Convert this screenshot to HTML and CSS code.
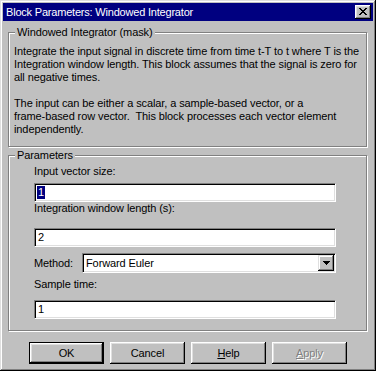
FILE: index.html
```html
<!DOCTYPE html>
<html>
<head>
<meta charset="utf-8">
<link rel="stylesheet" href="styles.css">
</head>
<body>
<div class="window">
  <div class="titlebar">
    <span class="title">Block Parameters: Windowed Integrator</span>
    <span class="close-btn"><svg width="8" height="7" viewBox="0 0 8 7" shape-rendering="crispEdges"><path d="M0 0h2v1h-2z M6 0h2v1h-2z M1 1h2v1h-2z M5 1h2v1h-2z M2 2h4v1h-4z M3 3h2v1h-2z M2 4h4v1h-4z M1 5h2v1h-2z M5 5h2v1h-2z M0 6h2v1h-2z M6 6h2v1h-2z"/></svg></span>
  </div>
  <div class="content">
    <fieldset class="group group-desc">
      <legend>Windowed Integrator (mask)</legend>
      <p class="para">Integrate the input signal in discrete time from time t-T to t where T is the<br>Integration window length. This block assumes that the signal is zero for<br>all negative times.</p>
      <p class="para">The input can be either a scalar, a sample-based vector, or a<br>frame-based row vector.&nbsp; This block processes each vector element<br>independently.</p>
    </fieldset>
    <fieldset class="group group-params">
      <legend>Parameters</legend>
      <div class="label lbl-1">Input vector size:</div>
      <div class="edit edit-1"><span class="selected">1</span></div>
      <div class="label lbl-2">Integration window length (s):</div>
      <div class="edit edit-2"><span>2</span></div>
      <div class="param-row">
        <div class="label lbl-method">Method:</div>
        <div class="combo">
          <span class="combo-text">Forward Euler</span>
          <span class="combo-btn"><svg width="7" height="4" viewBox="0 0 7 4" shape-rendering="crispEdges"><path d="M0 0h7v1h-7z M1 1h5v1h-5z M2 2h3v1h-3z M3 3h1v1h-1z"/></svg></span>
        </div>
      </div>
      <div class="label lbl-3">Sample time:</div>
      <div class="edit edit-3"><span>1</span></div>
    </fieldset>
    <div class="buttons">
      <div class="btn btn-default"><span class="btn-face">OK</span></div>
      <div class="btn"><span class="btn-face">Cancel</span></div>
      <div class="btn"><span class="btn-face"><u>H</u>elp</span></div>
      <div class="btn btn-disabled"><span class="btn-face"><u>A</u>pply</span></div>
    </div>
  </div>
</div>
</body>
</html>
```

FILE: styles.css
```css
* { box-sizing: border-box; }
html, body { margin: 0; padding: 0; }
body {
  width: 376px;
  height: 371px;
  overflow: hidden;
  background: #c0c0c0;
  font-family: "Liberation Sans", Arial, sans-serif;
  font-size: 11px;
  letter-spacing: -0.1px;
  line-height: 13px;
  color: #000;
}
.window {
  width: 376px;
  height: 371px;
  background: #c0c0c0;
  padding: 3px;
  display: flex;
  flex-direction: column;
  box-shadow: inset -1px -1px #000, inset 1px 1px #dfdfdf, inset -2px -2px #808080, inset 2px 2px #fff;
}
.titlebar {
  height: 18px;
  flex: none;
  background: #000080;
  color: #fff;
  display: flex;
  align-items: center;
  justify-content: space-between;
  padding: 0 2px 0 3px;
  letter-spacing: -0.2px;
}
.close-btn {
  width: 16px;
  height: 14px;
  background: #c0c0c0;
  padding: 3px 0 0 4px;
  box-shadow: inset -1px -1px #000, inset 1px 1px #fff, inset -2px -2px #808080, inset 2px 2px #dfdfdf;
}
.close-btn svg { display: block; fill: #000; }
.content {
  display: flex;
  flex-direction: column;
}
.group {
  margin: 0 6px 0 5px;
  padding: 6px 5px 10px 5px;
  border: 1px solid #808080;
  box-shadow: 1px 1px 0 #fff, inset 1px 1px 0 #fff;
  min-width: 0;
}
.group legend {
  padding: 0 2px;
  margin-left: 1px;
  line-height: 13px;
  background: #c0c0c0;
}
.group-desc { margin-top: 5px; }
.para { margin: 0; }
.para + .para { margin-top: 13px; }
.group-params {
  margin-top: 2px;
  padding: 3px 30px 11px 25px;
}
.group-params legend { margin-left: -19px; }
.label { height: 13px; }
.lbl-2 { margin-top: 0; }
.lbl-3 { margin-top: 5px; }
.edit {
  width: 302px;
  height: 19px;
  background: #fff;
  padding: 2px 0 0 2px;
  border: 1px solid;
  border-color: #808080 #fff #fff #808080;
  box-shadow: inset 1px 1px #000, inset -1px -1px #dfdfdf;
}
.edit-1 { margin-top: 5px; }
.edit-2 { margin-top: 13px; }
.edit-3 { margin-top: 9px; }
.edit span { display: inline-block; padding: 0 1px; line-height: 13px; }
.edit .selected { background: #000080; color: #fff; }
.param-row {
  display: flex;
  align-items: center;
  margin-top: 6px;
}
.lbl-method { width: 48px; }
.combo {
  width: 254px;
  height: 20px;
  background: #fff;
  display: flex;
  align-items: center;
  justify-content: space-between;
  padding: 0 1px 0 3px;
  border: 1px solid;
  border-color: #808080 #fff #fff #808080;
  box-shadow: inset 1px 1px #000, inset -1px -1px #dfdfdf;
}
.combo-btn {
  width: 16px;
  height: 16px;
  background: #c0c0c0;
  display: flex;
  align-items: center;
  justify-content: center;
  box-shadow: inset -1px -1px #000, inset 1px 1px #dfdfdf, inset -2px -2px #808080, inset 2px 2px #fff;
}
.combo-btn svg { display: block; fill: #000; }
.buttons {
  display: flex;
  justify-content: center;
  gap: 6px;
  margin-top: 11px;
}
.btn {
  width: 75px;
  height: 22px;
  background: #c0c0c0;
  display: flex;
  box-shadow: inset -1px -1px #000, inset 1px 1px #fff, inset -2px -2px #808080, inset 2px 2px #dfdfdf;
}
.btn-face {
  flex: 1;
  display: flex;
  align-items: center;
  justify-content: center;
}
.btn-default {
  border: 1px solid #000;
  box-shadow: none;
}
.btn-default .btn-face {
  box-shadow: inset -1px -1px #000, inset 1px 1px #fff, inset -2px -2px #808080, inset 2px 2px #dfdfdf;
}
.btn-disabled .btn-face {
  color: #808080;
  text-shadow: 1px 1px 0 #fff;
}
```
